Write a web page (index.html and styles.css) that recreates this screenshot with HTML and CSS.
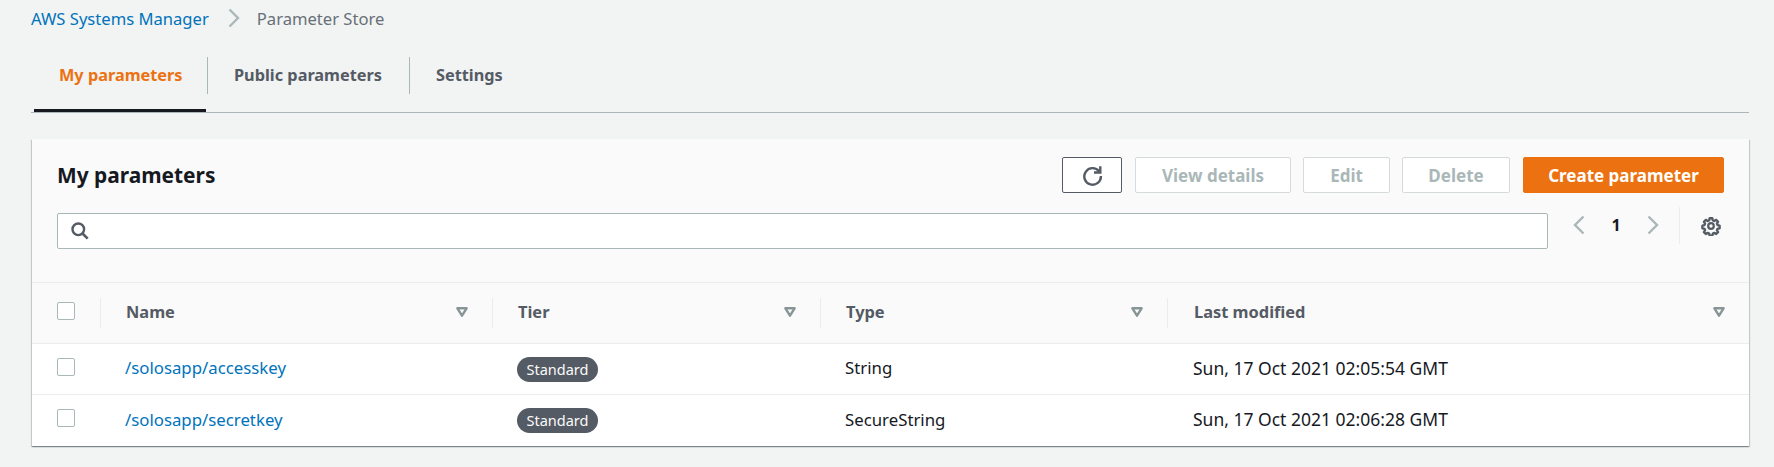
FILE: index.html
```html
<!DOCTYPE html>
<html lang="en">
<head>
<meta charset="utf-8">
<title>Parameter Store</title>
<link rel="stylesheet" href="styles.css">
</head>
<body>
<svg class="defs" width="0" height="0" aria-hidden="true">
  <symbol id="filter" viewBox="0 0 12 10"><path d="M1.400 1.300h9.200L6 8.700z" fill="none" stroke="#879596" stroke-width="2.400" stroke-linejoin="round"/></symbol>
</svg>
<main class="page">
  <nav class="crumbs">
    <a class="crumb-link" href="#">AWS Systems Manager</a>
    <svg class="crumb-sep" viewBox="0 0 12 20"><path d="M1.500 1.500 10 10l-8.500 8.500" fill="none" stroke="#aab7b8" stroke-width="2.400"/></svg>
    <span class="crumb-current">Parameter Store</span>
  </nav>
  <div class="tabs">
    <a class="tab tab-active" href="#">My parameters</a>
    <a class="tab tab-public" href="#">Public parameters</a>
    <a class="tab tab-settings" href="#">Settings</a>
  </div>
  <section class="card">
    <header class="card-head">
      <div class="head-row">
        <h1 class="title">My parameters</h1>
        <div class="actions">
          <button class="btn btn-refresh" aria-label="Refresh">
            <svg class="icon-refresh" viewBox="0 0 21 21"><path d="M17.200 6.400A8.300 8.300 0 1 0 18.900 11" fill="none" stroke="#545b64" stroke-width="2.400"/><path d="M18.300 1.200v6.300h-6.300" fill="none" stroke="#545b64" stroke-width="2.400"/></svg>
          </button>
          <button class="btn btn-view" disabled>View details</button>
          <button class="btn btn-edit" disabled>Edit</button>
          <button class="btn btn-delete" disabled>Delete</button>
          <button class="btn btn-primary">Create parameter</button>
        </div>
      </div>
      <div class="filter-row">
        <div class="search">
          <svg class="icon-search" viewBox="0 0 18 18"><circle cx="7.300" cy="7.300" r="5.800" fill="none" stroke="#545b64" stroke-width="2.400"/><path d="m11.500 11.500 5.200 5.200" stroke="#545b64" stroke-width="2.600"/></svg>
        </div>
        <div class="pager">
          <svg class="chev" viewBox="0 0 12 20"><path d="M10.500 1.500 2 10l8.500 8.500" fill="none" stroke="#aab7b8" stroke-width="2.400"/></svg>
          <span class="page-num">1</span>
          <svg class="chev" viewBox="0 0 12 20"><path d="M1.500 1.500 10 10l-8.500 8.500" fill="none" stroke="#aab7b8" stroke-width="2.400"/></svg>
        </div>
        <div class="prefs">
          <svg class="icon-gear" viewBox="0 0 20 20"><circle cx="10" cy="10" r="2.800" fill="none" stroke="#545b64" stroke-width="2.200"/><path d="M8.500 1.600h3l.5 2.300 1.600.7 2-1.300 2.100 2.100-1.300 2 .7 1.600 2.300.5v3l-2.300.5-.7 1.600 1.300 2-2.100 2.100-2-1.300-1.600.7-.5 2.300h-3l-.5-2.300-1.600-.7-2 1.300-2.100-2.100 1.300-2-.7-1.600-2.300-.5v-3l2.300-.5.700-1.600-1.300-2 2.100-2.100 2 1.300 1.600-.7z" transform="translate(.8 .8) scale(.92)" fill="none" stroke="#545b64" stroke-width="2.500" stroke-linejoin="round"/></svg>
        </div>
      </div>
    </header>
    <table class="grid">
      <colgroup><col class="c-check"><col class="c-name"><col class="c-tier"><col class="c-type"><col></colgroup>
      <thead>
        <tr>
          <th class="cell-check"><span class="box"></span></th>
          <th><div class="th-in"><span>Name</span><svg class="sort"><use href="#filter"/></svg></div></th>
          <th><div class="th-in"><span>Tier</span><svg class="sort"><use href="#filter"/></svg></div></th>
          <th><div class="th-in"><span>Type</span><svg class="sort"><use href="#filter"/></svg></div></th>
          <th><div class="th-in th-last"><span>Last modified</span><svg class="sort"><use href="#filter"/></svg></div></th>
        </tr>
      </thead>
      <tbody>
        <tr>
          <td class="cell-check"><span class="box"></span></td>
          <td><a class="cell-text name-link" href="#">/solosapp/accesskey</a></td>
          <td><span class="badge">Standard</span></td>
          <td><span class="cell-text cell-type">String</span></td>
          <td><span class="cell-text cell-date">Sun, 17 Oct 2021 02:05:54 GMT</span></td>
        </tr>
        <tr>
          <td class="cell-check"><span class="box"></span></td>
          <td><a class="cell-text name-link" href="#">/solosapp/secretkey</a></td>
          <td><span class="badge">Standard</span></td>
          <td><span class="cell-text cell-type">SecureString</span></td>
          <td><span class="cell-text cell-date">Sun, 17 Oct 2021 02:06:28 GMT</span></td>
        </tr>
      </tbody>
    </table>
  </section>
</main>
</body>
</html>
```
FILE: styles.css
```css
* { box-sizing: border-box; }
html, body { margin: 0; padding: 0; }
body {
  background: #f2f3f3;
  color: #16191f;
  font-family: "Noto Sans", "Liberation Sans", sans-serif;
  font-size: 16px;
  height: 467px;
  overflow: hidden;
}
.defs { position: absolute; }
.page { padding: 0 25px 0 31px; }
a { text-decoration: none; }

.crumbs { display: flex; align-items: center; height: 36px; font-size: 16.600px; margin-bottom: 2px; }
.crumb-link { color: #0073bb; }
.crumb-sep { width: 12px; height: 20px; margin: 0 17px 0 19px; flex: none; }
.crumb-current { color: #687078; }

.tabs { display: flex; height: 75px; padding: 19px 0 0 3px; border-bottom: 1px solid #aab7b8; align-items: flex-start; font-size: 16.300px; }
.tab { display: flex; align-items: center; height: 37px; padding-bottom: 2px; font-weight: 700; color: #545b64; position: relative; white-space: nowrap; }
.tab-active { width: 174px; padding-left: 25px; color: #ec7211; border-right: 1px solid #aab7b8; }
.tab-active::after { content: ""; position: absolute; left: 0; right: 1px; top: 52px; height: 3px; background: #16191f; }
.tab-public { width: 202px; padding-left: 26px; border-right: 1px solid #aab7b8; }
.tab-settings { padding-left: 26px; }

.card {
  margin: 26px 0 0 1px;
  background: #fff;
  box-shadow: 0 1px 1px 0 rgba(0,28,36,.3), 1px 1px 1px 0 rgba(0,28,36,.15), -1px 1px 1px 0 rgba(0,28,36,.15);
}
.card-head { background: #fafafa; height: 144px; padding: 18px 25px 0 25px; border-bottom: 1px solid #eaeded; }
.head-row { display: flex; align-items: center; justify-content: space-between; height: 36px; }
.title { margin: 0; font-size: 20.900px; font-weight: 700; color: #16191f; }
.actions { display: flex; gap: 12px; }
.btn {
  height: 36px;
  border: 1px solid #d5dbdb;
  border-radius: 2px;
  background: #fff;
  color: #aab7b8;
  font: 700 17px "Noto Sans", "Liberation Sans", sans-serif;
  padding: 0;
  display: flex;
  align-items: center;
  justify-content: center;
}
.btn-refresh { width: 60px; border-color: #545b64; margin-right: 1px; }
.btn-view { width: 156px; }
.btn-edit { width: 87px; }
.btn-delete { width: 108px; margin-right: 1px; }
.btn-primary { width: 201px; background: #ec7211; border-color: #ec7211; color: #fff; }
.icon-refresh { width: 21px; height: 21px; }

.filter-row { display: flex; margin-top: 20px; height: 36px; }
.search { width: 1492px; height: 36px; background: #fff; border: 1px solid #aab7b8; border-radius: 2px; display: flex; align-items: center; padding-left: 13px; }
.icon-search { width: 18px; height: 18px; }
.pager { display: flex; align-items: center; width: 131px; padding-left: 25px; margin-top: -6px; height: 36px; }
.chev { width: 12px; height: 20px; flex: none; }
.page-num { width: 62px; text-align: center; font-weight: 700; font-size: 16px; color: #16191f; }
.prefs { width: 45px; height: 37px; margin-top: -6px; border-left: 1px solid #eaeded; display: flex; align-items: center; justify-content: flex-end; padding-right: 3px; }
.icon-gear { width: 20px; height: 20px; }

.grid { width: 100%; table-layout: fixed; border-collapse: collapse; }
.c-check { width: 68px; }
.c-name { width: 392px; }
.c-tier { width: 328px; }
.c-type { width: 347px; }
.grid th { height: 60px; background: #fafafa; border-bottom: 1px solid #eaeded; text-align: left; font-weight: 700; font-size: 16.400px; color: #545b64; padding: 0; }
.th-in { height: 30px; display: flex; align-items: center; justify-content: space-between; border-left: 1px solid #eaeded; padding: 0 24px 2px 25px; }
.th-last { padding-left: 26px; }
.sort { width: 12px; height: 10px; }
.grid td { height: 51px; border-bottom: 1px solid #eaeded; padding: 0 0 0 25px; color: #16191f; }
.grid tbody tr:last-child td { border-bottom: 0; height: 52px; }
.grid td.cell-check, .grid th.cell-check { padding: 0 0 0 25px; }
.cell-text { display: block; margin-top: -2px; }
.cell-type { font-size: 16.800px; }
.cell-date { font-size: 17.500px; margin-left: 1px; }
.box { display: block; width: 18px; height: 18px; background: #fff; border: 1px solid #aab7b8; border-radius: 2px; margin-top: -4px; }
.name-link { color: #0073bb; font-size: 16.800px; }
.badge { display: block; width: 81px; height: 25px; line-height: 25px; margin-top: 1px; text-align: center; border-radius: 12.500px; background: #545b64; color: #fafafa; font-size: 14.500px; }
```
